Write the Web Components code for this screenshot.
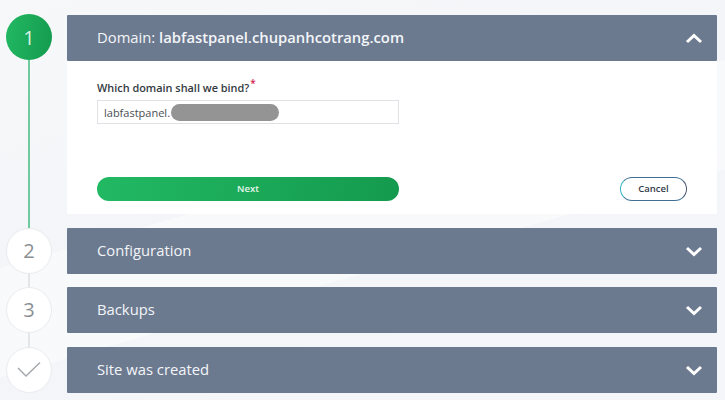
<!DOCTYPE html>
<html>
<head>
<meta charset="utf-8">
<title>Create site</title>
<style>
  html, body { margin: 0; height: 100%; overflow: hidden; }
  body {
    background:
      linear-gradient(164deg, rgba(255,255,255,0) 0 44%, rgba(255,255,255,.45) 44.2% 62%, rgba(255,255,255,0) 62.2%),
      linear-gradient(160deg, #f7f8fa 0%, #f3f5f8 45%, #f5f6f9 100%);
    font-family: "Open Sans", "Liberation Sans", sans-serif;
  }
  b { font-weight: 600; }
</style>
</head>
<body>
<wizard-page>
  <wizard-step marker="1" state="active" line="green" gap="14">
    <span slot="title">Domain: <b>labfastpanel.chupanhcotrang.com</b></span>
    <domain-form></domain-form>
  </wizard-step>
  <wizard-step marker="2" line="grey" gap="13">
    <span slot="title">Configuration</span>
  </wizard-step>
  <wizard-step marker="3" line="grey" gap="14">
    <span slot="title">Backups</span>
  </wizard-step>
  <wizard-step marker="check">
    <span slot="title">Site was created</span>
  </wizard-step>
</wizard-page>

<script>
class WizardPage extends HTMLElement {
  constructor() {
    super();
    this.attachShadow({ mode: "open" }).innerHTML = `
      <style>
        :host { display: flex; flex-direction: column; padding: 15px 8px 0 0; }
      </style>
      <slot></slot>
    `;
  }
}

const CHEVRON_UP = `<svg width="18" height="11" viewBox="0 0 18 11"><path d="M2 9 L9 2.5 L16 9" fill="none" stroke="#fff" stroke-width="3"/></svg>`;
const CHEVRON_DOWN = `<svg width="18" height="11" viewBox="0 0 18 11"><path d="M2 2 L9 8.5 L16 2" fill="none" stroke="#fff" stroke-width="3"/></svg>`;
const CHECK = `<svg width="24" height="17" viewBox="0 0 24 17"><path d="M1 7 L9 15 L23 1.5" fill="none" stroke="#a3a7ab" stroke-width="1.4"/></svg>`;

class WizardStep extends HTMLElement {
  constructor() {
    super();
    const marker = this.getAttribute("marker");
    const active = this.getAttribute("state") === "active";
    const line = this.getAttribute("line");
    const gap = this.getAttribute("gap") || 0;
    this.attachShadow({ mode: "open" }).innerHTML = `
      <style>
        :host { display: grid; grid-template-columns: 67px 1fr; }
        .rail { display: flex; flex-direction: column; align-items: center; width: 58px; }
        .circle {
          box-sizing: border-box; width: 46px; height: 46px; border-radius: 50%;
          display: flex; align-items: center; justify-content: center; flex: none;
          background: #fff; border: 1px solid #e9ebee; color: #8b8f93; font-size: 20px;
          padding-bottom: 2px;
        }
        .circle.on {
          background: linear-gradient(100deg, #22b963, #149a4e); border: 0;
          color: #d9f1e2; margin-top: -1px; padding-bottom: 0;
        }
        .line { flex: 1; width: 2px; background: #e3e5e9; }
        .line.green { background: #6fcb9f; }
        .main { padding-bottom: ${gap}px; min-width: 0; }
        .head {
          height: 46px; background: #6c7a90; color: #f3f5f8; border-radius: 1px;
          display: flex; align-items: center; justify-content: space-between;
          padding: 0 14px 0 30px; font-size: 14.8px;
        }
        ::slotted(span) { display: block; margin-top: -2px; }
        .body { background: #fff; }
      </style>
      <div class="rail">
        <div class="circle ${active ? "on" : ""}">${marker === "check" ? CHECK : marker}</div>
        ${line ? `<div class="line ${line}"></div>` : ""}
      </div>
      <div class="main">
        <div class="head"><slot name="title"></slot>${active ? CHEVRON_UP : CHEVRON_DOWN}</div>
        ${active ? `<div class="body"><slot></slot></div>` : ""}
      </div>
    `;
  }
}

class DomainForm extends HTMLElement {
  constructor() {
    super();
    this.attachShadow({ mode: "open" }).innerHTML = `
      <style>
        :host { display: block; height: 153px; box-sizing: border-box; padding: 20px 30px 0; font-size: 10.9px; color: #33393f; }
        label { display: block; font-weight: 600; line-height: 14px; height: 19px; }
        label sup { color: #d0264e; font-size: 10px; line-height: 0; margin-left: 1px; }
        .col { width: 302px; }
        .input {
          box-sizing: border-box; height: 24px; border: 1px solid #dfe1e5; background: #fff;
          display: flex; align-items: center; padding-left: 6px; font-size: 11px; color: #4a4f55;
        }
        .blur { width: 108px; height: 17px; margin-left: 1px; border-radius: 9px; background: #949494; flex: none; }
        .actions { display: flex; justify-content: space-between; align-items: center; margin-top: 53px; }
        button { font: inherit; font-size: 9.5px; font-weight: 600; cursor: pointer; padding: 0 0 2px; }
        .next {
          width: 302px; height: 24px; border: 0; border-radius: 12px; color: #e6f6ec;
          background: linear-gradient(100deg, #22b963, #149a4e);
        }
        .cancel {
          width: 67px; height: 24px; border-radius: 12px; background: #fff; color: #333b4a;
          border: 1.5px solid #3f6f94; border-left-color: #39b4c4; border-right-color: #47566f;
        }
      </style>
      <label>Which domain shall we bind?<sup>*</sup></label>
      <div class="col">
        <div class="input"><span>labfastpanel.</span><div class="blur"></div></div>
      </div>
      <div class="actions">
        <button class="next">Next</button>
        <button class="cancel">Cancel</button>
      </div>
    `;
  }
}

customElements.define("wizard-page", WizardPage);
customElements.define("wizard-step", WizardStep);
customElements.define("domain-form", DomainForm);
</script>
</body>
</html>
